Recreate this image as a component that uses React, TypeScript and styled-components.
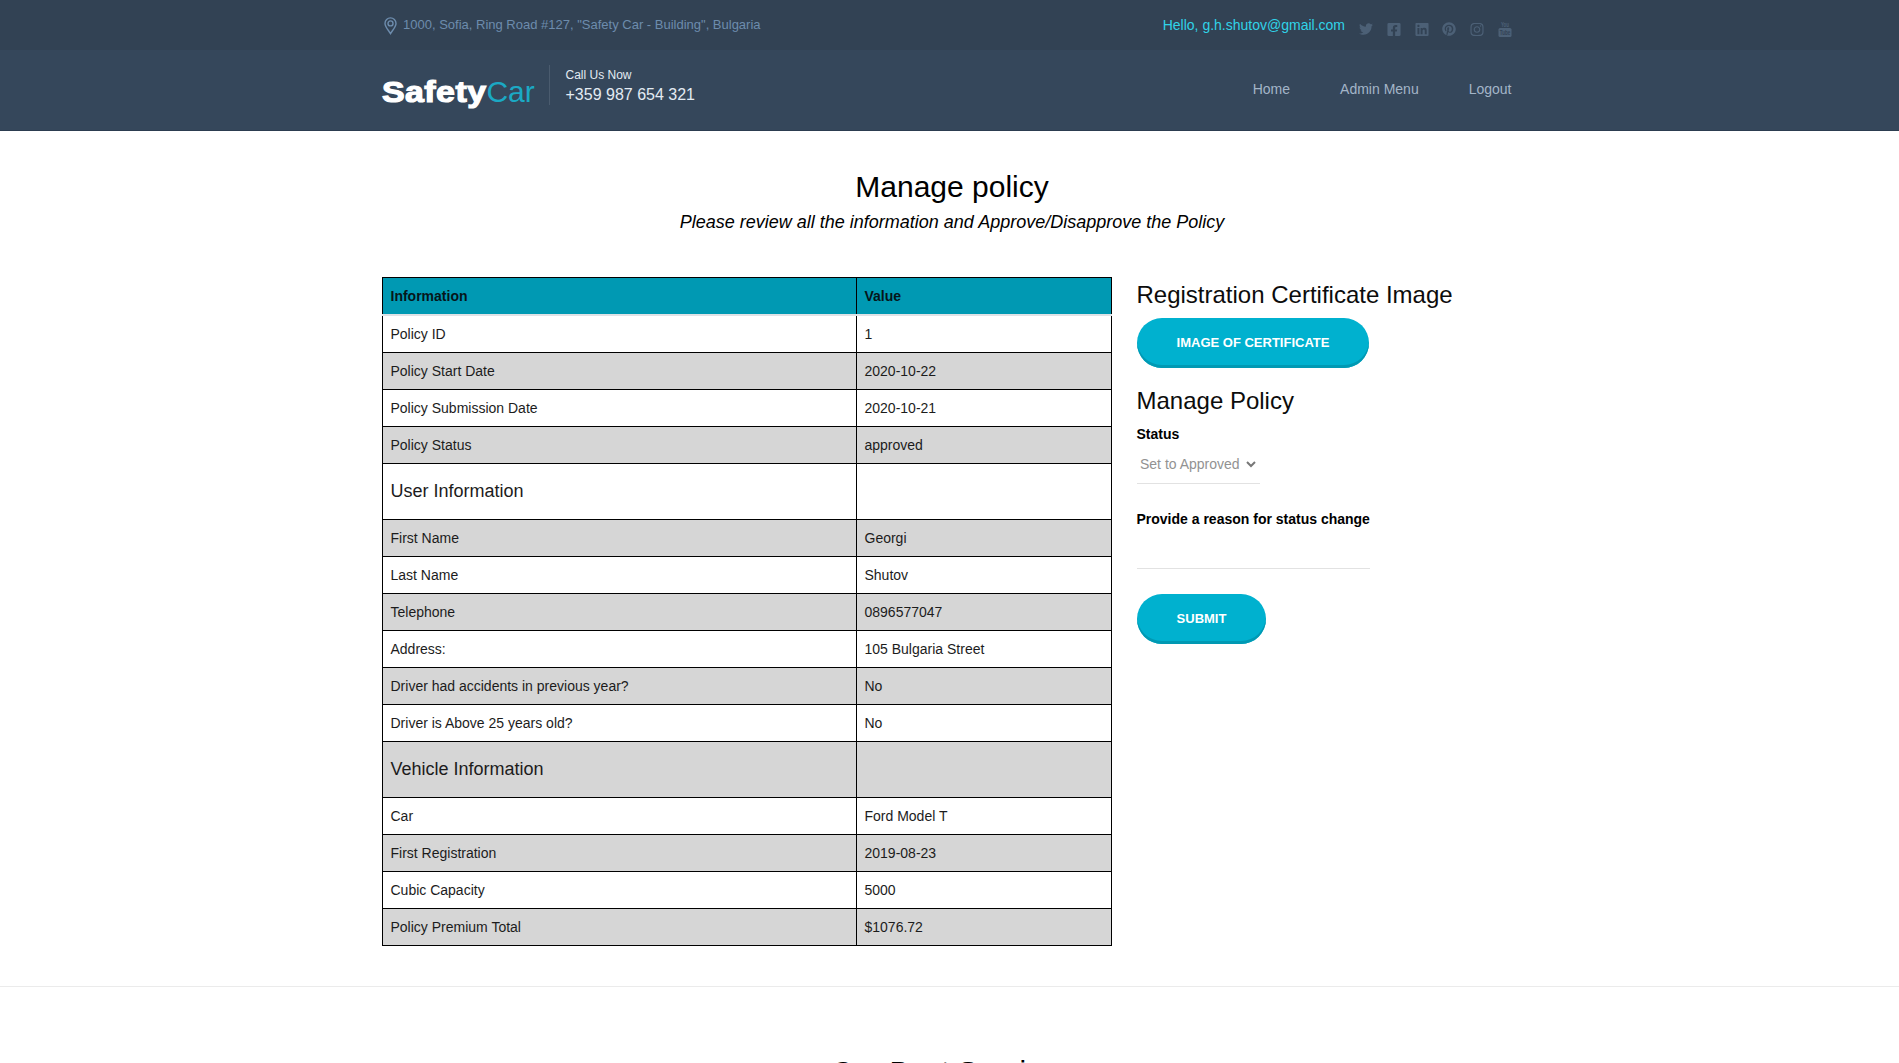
import React from "react";
import styled, { createGlobalStyle, css } from "styled-components";
import { FaTwitter, FaLinkedin, FaPinterest, FaInstagram, FaFacebookSquare } from "react-icons/fa";

const GlobalStyle = createGlobalStyle`
  *, *::before, *::after { box-sizing: border-box; }
  html, body { margin: 0; padding: 0; height: 100%; overflow: hidden; }
  body {
    background: #fff;
    color: #000;
    font-family: "Liberation Sans", Arial, sans-serif;
    font-size: 14px;
    line-height: 20px;
  }
`;

const Page = styled.div`
  height: 1063px;
  overflow: hidden;
`;

const Header = styled.header`
  height: 131px;
  background: #35475b;
  border-bottom: 1px solid #2c3d50;
`;

const Container = styled.div`
  width: 1140px;
  margin-left: 382px;
`;

const TopBar = styled.div`
  height: 50px;
  background: #324254;
`;

const TopRow = styled(Container)`
  display: flex;
  justify-content: space-between;
  align-items: flex-start;
  padding: 15px 10px 0 2px;
`;

const Address = styled.div`
  display: flex;
  align-items: flex-start;
  gap: 6px;
  color: #6d8cad;
  font-size: 13px;
  line-height: 20px;

  svg { margin-top: 2px; }
`;

const Account = styled.div`
  display: flex;
  align-items: flex-start;
`;

const Greeting = styled.a`
  color: #30d3e8;
  font-size: 14px;
  line-height: 20px;
`;

const Socials = styled.ul`
  display: flex;
  gap: 13.8px;
  list-style: none;
  margin: 7px 0 0 14px;
  padding: 0;
  color: #4c6076;

  li { display: flex; width: 14px; height: 14px; }
`;

const NavRow = styled(Container)`
  display: flex;
  justify-content: space-between;
  padding-right: 10.5px;
`;

const Brand = styled.div`
  display: flex;
  align-items: flex-start;
`;

const Logo = styled.a`
  margin-top: 25px;
  width: 167px;
  color: #1ba9c4;
  font-size: 30px;
  line-height: 34px;
  white-space: nowrap;

  strong {
    display: inline-block;
    margin-right: 12px;
    color: #fff;
    font-weight: 700;
    letter-spacing: 0.4px;
    -webkit-text-stroke: 1.2px #fff;
    transform: scaleX(1.13);
    transform-origin: left center;
  }
`;

const Phone = styled.div`
  margin-top: 15px;
  height: 40px;
  padding: 1px 0 0 15.5px;
  border-left: 1px solid #4a5b6e;
  color: #e3ebf3;
  font-size: 16px;
  line-height: 19px;

  small { display: block; font-size: 12px; line-height: 19px; }
`;

const Nav = styled.nav`
  display: flex;
  gap: 50px;
  padding-top: 29px;
  color: #a3b5c8;
`;

const Intro = styled.section`
  height: 146px;
  padding-top: 38px;
  text-align: center;
`;

const Title = styled.h2`
  margin: 0;
  font-size: 30px;
  font-weight: 400;
  line-height: 36px;
`;

const Subtitle = styled.p`
  margin: 7px 0 0;
  font-size: 18px;
  font-style: italic;
  line-height: 20px;
`;

const Columns = styled(Container)`
  display: grid;
  grid-template-columns: 730px 1fr;
  column-gap: 25px;
  align-items: start;
  height: 709px;
`;

const Table = styled.table`
  width: 730px;
  border-collapse: collapse;
  table-layout: fixed;
`;

const HeadCell = styled.th<{ $width?: number }>`
  ${(p) => p.$width && css`width: ${p.$width}px;`}
  height: 37px;
  padding: 1px 7.5px 0;
  background: #0099b3;
  border: 1px solid #000;
  border-bottom: 2px solid #dee2e6;
  color: #06161a;
  text-align: left;
  font-weight: 700;
`;

const Row = styled.tr<{ $section?: boolean }>`
  height: ${(p) => (p.$section ? 56 : 37)}px;
  font-size: ${(p) => (p.$section ? 18 : 14)}px;
  &:first-child { height: 38px; }
  &:nth-child(even) { background: #d6d6d6; }
`;

const Cell = styled.td<{ $section?: boolean }>`
  padding: 0 7.5px ${(p) => (p.$section ? 2 : 0)}px;
  border: 1px solid #000;
  color: #1c1c1c;
`;

const Side = styled.aside`
  padding-top: 3px;
`;

const Heading = styled.h3<{ $top?: number }>`
  margin: ${(p) => p.$top ?? 0}px 0 0 -0.5px;
  font-size: 24px;
  font-weight: 400;
  line-height: 29px;
  color: #0c0c0c;
`;

const Button = styled.button<{ $top: number; $width: number }>`
  display: block;
  width: ${(p) => p.$width}px;
  height: 50px;
  margin-top: ${(p) => p.$top}px;
  padding: 0 0 2px;
  border: 0;
  border-radius: 25px;
  background: #00b1cf;
  box-shadow: inset 0 -3px 0 #0099b3;
  color: #fff;
  font: 700 13px "Liberation Sans", Arial, sans-serif;
  text-transform: uppercase;
  white-space: nowrap;
`;

const Label = styled.label<{ $top: number }>`
  display: block;
  margin: ${(p) => p.$top}px 0 0 -0.5px;
  font-weight: 700;
`;

const Select = styled.div`
  display: flex;
  align-items: center;
  justify-content: space-between;
  width: 123px;
  height: 40px;
  padding: 1px 4px 0 3px;
  border-bottom: 1px solid #e2e2e2;
  color: #929292;
`;

const Reason = styled.input`
  display: block;
  width: 233px;
  height: 40px;
  padding: 0;
  border: 0;
  border-bottom: 1px solid #e2e2e2;
  outline: 0;
`;

const Services = styled.section`
  border-top: 1px solid #ebebeb;
  padding-top: 67px;
  text-align: center;
`;

const rows: { label: string; value?: string; section?: boolean }[] = [
  { label: "Policy ID", value: "1" },
  { label: "Policy Start Date", value: "2020-10-22" },
  { label: "Policy Submission Date", value: "2020-10-21" },
  { label: "Policy Status", value: "approved" },
  { label: "User Information", section: true },
  { label: "First Name", value: "Georgi" },
  { label: "Last Name", value: "Shutov" },
  { label: "Telephone", value: "0896577047" },
  { label: "Address:", value: "105 Bulgaria Street" },
  { label: "Driver had accidents in previous year?", value: "No" },
  { label: "Driver is Above 25 years old?", value: "No" },
  { label: "Vehicle Information", section: true },
  { label: "Car", value: "Ford Model T" },
  { label: "First Registration", value: "2019-08-23" },
  { label: "Cubic Capacity", value: "5000" },
  { label: "Policy Premium Total", value: "$1076.72" },
];

const PinIcon = () => (
  <svg width="13" height="18" viewBox="0 0 13 18" fill="none" stroke="currentColor" strokeWidth="1.4">
    <path d="M6.5 16.6C4.6 13.4 1 9.6 1 6.4a5.5 5.5 0 0 1 11 0c0 3.2-3.6 7-5.5 10.2z" />
    <circle cx="6.5" cy="6.4" r="2.5" />
  </svg>
);

const YouTubeIcon = () => (
  <svg width="14" height="16" viewBox="0 0 14 16" fill="currentColor" overflow="visible">
    <text x="3" y="4.5" fontSize="7" fontWeight="700" textLength="8" lengthAdjust="spacingAndGlyphs">You</text>
    <rect x="0.5" y="6" width="13" height="9" rx="1.5" />
    <text x="1.8" y="13.3" fontSize="7" fontWeight="700" fill="#324254" textLength="10.5" lengthAdjust="spacingAndGlyphs">Tube</text>
  </svg>
);

export default function App() {
  return (
    <Page>
      <GlobalStyle />
      <Header>
        <TopBar>
          <TopRow>
            <Address>
              <PinIcon />
              <span>1000, Sofia, Ring Road #127, "Safety Car - Building", Bulgaria</span>
            </Address>
            <Account>
              <Greeting>Hello, g.h.shutov@gmail.com</Greeting>
              <Socials>
                <li><FaTwitter size={14} /></li>
                <li><FaFacebookSquare size={15} /></li>
                <li><FaLinkedin size={15} /></li>
                <li><FaPinterest size={14} /></li>
                <li><FaInstagram size={15} /></li>
                <li><YouTubeIcon /></li>
              </Socials>
            </Account>
          </TopRow>
        </TopBar>
        <NavRow>
          <Brand>
            <Logo><strong>Safety</strong>Car</Logo>
            <Phone><small>Call Us Now</small>+359 987 654 321</Phone>
          </Brand>
          <Nav>
            <a>Home</a>
            <a>Admin Menu</a>
            <a>Logout</a>
          </Nav>
        </NavRow>
      </Header>
      <Container>
        <Intro>
          <Title>Manage policy</Title>
          <Subtitle>Please review all the information and Approve/Disapprove the Policy</Subtitle>
        </Intro>
      </Container>
      <Columns>
        <Table>
          <thead>
            <tr>
              <HeadCell $width={474}>Information</HeadCell>
              <HeadCell>Value</HeadCell>
            </tr>
          </thead>
          <tbody>
            {rows.map((row) => (
              <Row key={row.label} $section={row.section}>
                <Cell $section={row.section}>{row.label}</Cell>
                <Cell>{row.value}</Cell>
              </Row>
            ))}
          </tbody>
        </Table>
        <Side>
          <Heading>Registration Certificate Image</Heading>
          <Button $top={9} $width={232}>Image of certificate</Button>
          <Heading $top={18}>Manage Policy</Heading>
          <Label $top={9}>Status</Label>
          <Select>
            Set to Approved
            <svg width="10" height="7" viewBox="0 0 10 7" fill="none" stroke="#777" strokeWidth="2">
              <path d="M1 1l4 4 4-4" />
            </svg>
          </Select>
          <Label $top={25}>Provide a reason for status change</Label>
          <Reason />
          <Button $top={25} $width={129}>Submit</Button>
        </Side>
      </Columns>
      <Services>
        <Container>
          <Title>Our Best Services</Title>
        </Container>
      </Services>
    </Page>
  );
}
